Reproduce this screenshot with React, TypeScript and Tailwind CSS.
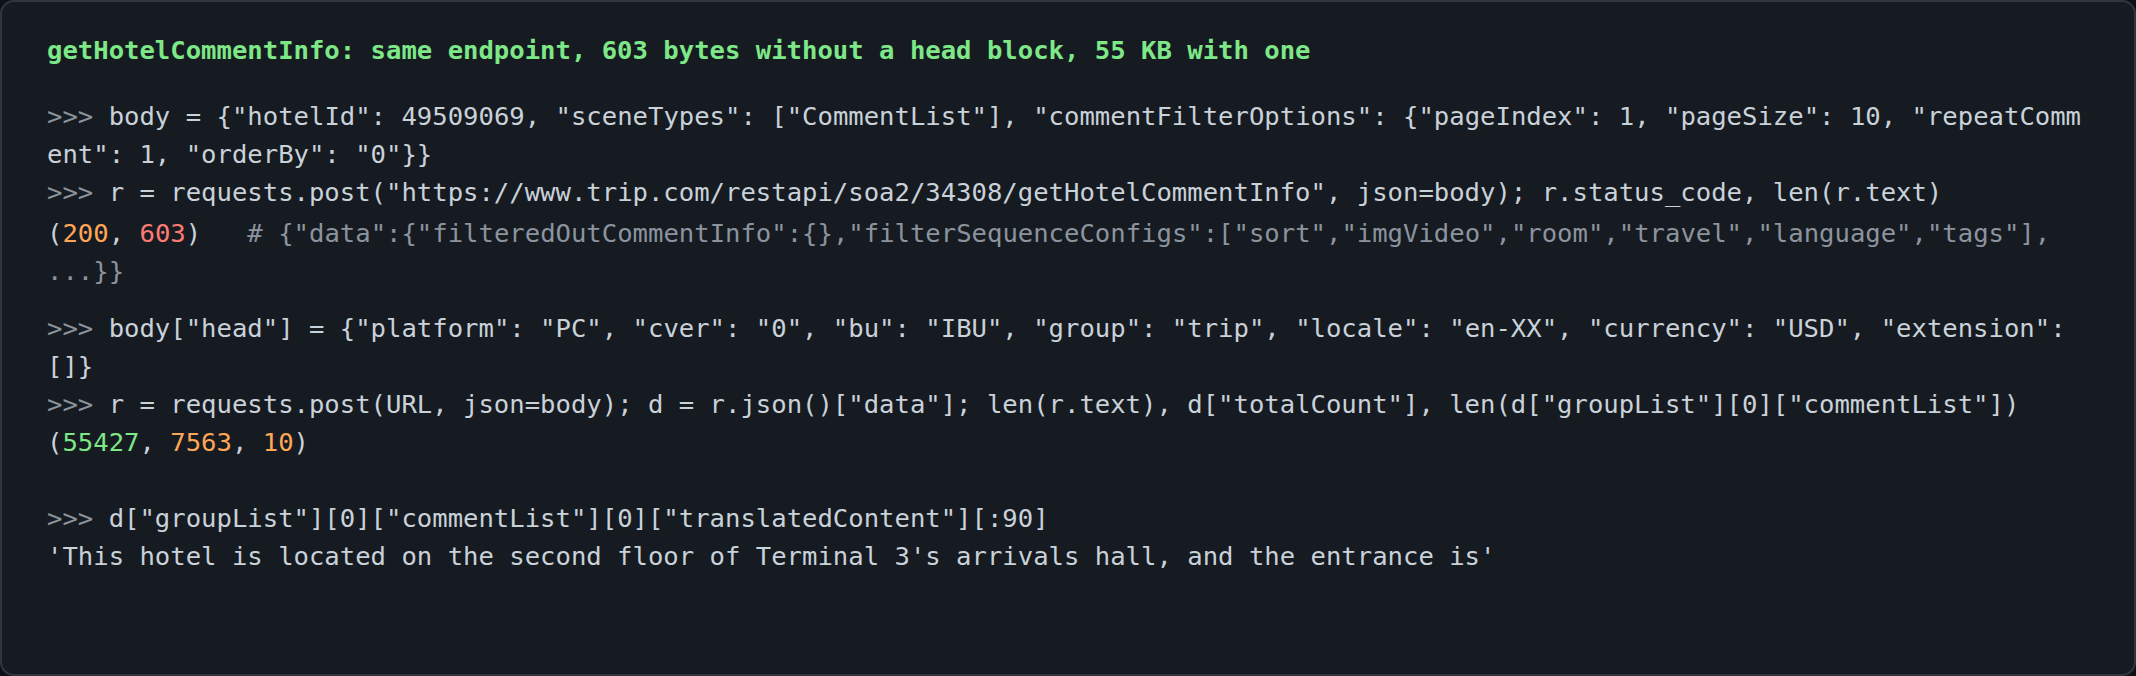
const mono = { fontFamily: '"DejaVu Sans Mono", "Liberation Mono", monospace' };

function P() {
  return <span className="text-[#8b949e]">&gt;&gt;&gt; </span>;
}

export default function App() {
  return (
    <div className="min-h-screen bg-[#0d1117]">
      <div
        className="h-[676px] rounded-[14px] border-2 border-[#30363d] bg-[#161b22] pl-[45px] pt-[29px] text-[25.6px] leading-[38px] text-[#c9d1d9] whitespace-pre"
        style={mono}
      >
        {/* title */}
        <div className="font-bold text-[#7ee787]">
          getHotelCommentInfo: same endpoint, 603 bytes without a head block, 55 KB with one
        </div>

        {/* first request */}
        <div className="mt-[28px]">
          <div><P />body = {'{'}"hotelId": 49509069, "sceneTypes": ["CommentList"], "commentFilterOptions": {'{'}"pageIndex": 1, "pageSize": 10, "repeatComm</div>
          <div>ent": 1, "orderBy": "0"{'}}'}</div>
          <div><P />r = requests.post("https://www.trip.com/restapi/soa2/34308/getHotelCommentInfo", json=body); r.status_code, len(r.text)</div>
          <div className="pt-[3px]">
            (<span className="text-[#ffa657]">200</span>, <span className="text-[#ff7b72]">603</span>)
            <span className="text-[#8b949e]">{'   # {"data":{"filteredOutCommentInfo":{},"filterSequenceConfigs":["sort","imgVideo","room","travel","language","tags"],'}</span>
          </div>
          <div className="text-[#8b949e]">{'...}}'}</div>
        </div>

        {/* with head block */}
        <div className="mt-[19px]">
          <div><P />body["head"] = {'{'}"platform": "PC", "cver": "0", "bu": "IBU", "group": "trip", "locale": "en-XX", "currency": "USD", "extension":</div>
          <div>[]{'}'}</div>
          <div><P />r = requests.post(URL, json=body); d = r.json()["data"]; len(r.text), d["totalCount"], len(d["groupList"][0]["commentList"])</div>
          <div>
            (<span className="text-[#7ee787]">55427</span>, <span className="text-[#ffa657]">7563</span>, <span className="text-[#ffa657]">10</span>)
          </div>
        </div>

        {/* first comment */}
        <div className="mt-[38px]">
          <div><P />d["groupList"][0]["commentList"][0]["translatedContent"][:90]</div>
          <div>'This hotel is located on the second floor of Terminal 3's arrivals hall, and the entrance is'</div>
        </div>
      </div>
    </div>
  );
}
